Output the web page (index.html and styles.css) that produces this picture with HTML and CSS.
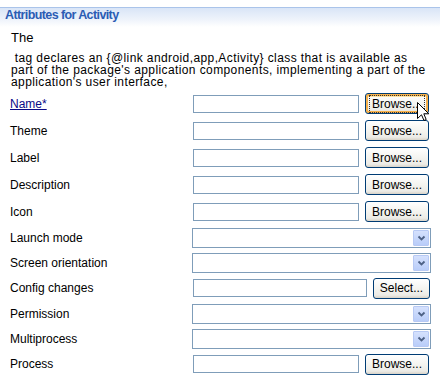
FILE: index.html
```html
<!DOCTYPE html>
<html lang="en">
<head>
  <meta charset="UTF-8" />
  <title>Attributes for Activity</title>
  <link rel="stylesheet" href="styles.css">
</head>
<body>
  <div class="section">
    <div class="section__head">Attributes for Activity</div>

    <!-- descrição -->
    <div class="desc">
      <p class="desc__first">The</p>
      <p class="desc__body">&nbsp;tag declares an {@link android,app,Activity} class that is available as<br>part of the package's application components, implementing a part of the<br>application's user interface,</p>
    </div>

    <!-- atributos -->
    <div class="attrs">
      <div class="row row--tall">
        <a class="label label--link" href="#">Name*</a>
        <div class="field">
          <input class="text" type="text">
          <button class="btn btn--browse btn--hover" type="button"><span class="btn__focus">Browse...</span></button>
        </div>
      </div>
      <div class="row row--tall">
        <span class="label">Theme</span>
        <div class="field">
          <input class="text" type="text">
          <button class="btn btn--browse" type="button">Browse...</button>
        </div>
      </div>
      <div class="row row--tall">
        <span class="label">Label</span>
        <div class="field">
          <input class="text" type="text">
          <button class="btn btn--browse" type="button">Browse...</button>
        </div>
      </div>
      <div class="row row--tall">
        <span class="label">Description</span>
        <div class="field">
          <input class="text" type="text">
          <button class="btn btn--browse" type="button">Browse...</button>
        </div>
      </div>
      <div class="row row--tall">
        <span class="label">Icon</span>
        <div class="field">
          <input class="text" type="text">
          <button class="btn btn--browse" type="button">Browse...</button>
        </div>
      </div>
      <div class="row">
        <span class="label">Launch mode</span>
        <div class="combo"><span class="combo__arrow"><svg width="9" height="6" viewBox="0 0 9 6"><path d="M1.5 1.5 L4.5 4.5 L7.5 1.5" fill="none" stroke="#4d6185" stroke-width="1.8"/></svg></span></div>
      </div>
      <div class="row">
        <span class="label">Screen orientation</span>
        <div class="combo"><span class="combo__arrow"><svg width="9" height="6" viewBox="0 0 9 6"><path d="M1.5 1.5 L4.5 4.5 L7.5 1.5" fill="none" stroke="#4d6185" stroke-width="1.8"/></svg></span></div>
      </div>
      <div class="row row--mid">
        <span class="label">Config changes</span>
        <div class="field">
          <input class="text text--wide" type="text">
          <button class="btn btn--select" type="button">Select...</button>
        </div>
      </div>
      <div class="row">
        <span class="label">Permission</span>
        <div class="combo"><span class="combo__arrow"><svg width="9" height="6" viewBox="0 0 9 6"><path d="M1.5 1.5 L4.5 4.5 L7.5 1.5" fill="none" stroke="#4d6185" stroke-width="1.8"/></svg></span></div>
      </div>
      <div class="row">
        <span class="label">Multiprocess</span>
        <div class="combo"><span class="combo__arrow"><svg width="9" height="6" viewBox="0 0 9 6"><path d="M1.5 1.5 L4.5 4.5 L7.5 1.5" fill="none" stroke="#4d6185" stroke-width="1.8"/></svg></span></div>
      </div>
      <div class="row row--mid">
        <span class="label">Process</span>
        <div class="field">
          <input class="text" type="text">
          <button class="btn btn--browse" type="button">Browse...</button>
        </div>
      </div>
    </div>
  </div>

  <!-- ponteiro do mouse sobre o botão -->
  <svg class="cursor" width="13" height="20" viewBox="0 0 13 20">
    <path d="M0.5 0.5 L0.5 16.5 L4.5 12.8 L7 18.5 L9.2 17.5 L6.8 11.8 L11.8 11.8 Z" fill="#fff" stroke="#000" stroke-width="1"/>
  </svg>
</body>
</html>
```

FILE: styles.css
```css
/* BASE ----------------------------------------------------------------*/
*,::before,::after{box-sizing:border-box;margin:0;padding:0}
body{
  font-family:"Liberation Sans",Arial,sans-serif;
  font-size:12px;
  color:#000;
  background:#fff;
  width:440px;
  height:379px;
  overflow:hidden;
  position:relative;
}

/* CABEÇALHO -----------------------------------------------------------*/
.section{margin-top:7px;border-top:1px solid #aac4ea}
.section__head{
  height:19px;
  padding:0 0 0 5px;
  font-weight:700;
  font-size:12.5px;
  line-height:15px;
  letter-spacing:-.6px;
  color:#2b5cb4;
  background:linear-gradient(to bottom,#d9e5f7,#eef3fb 60%,#fff);
}

/* DESCRIÇÃO -----------------------------------------------------------*/
.desc{padding:0 0 0 11px;line-height:12px}
.desc__first{margin-top:4px;font-size:13px;line-height:14px}
.desc__body{margin-top:7px;letter-spacing:.4px}

/* LINHAS --------------------------------------------------------------*/
.attrs{margin-top:2px}
.row{display:flex;align-items:center;height:25px}
.row--tall{height:27px}
.row--mid{height:26px}
.label{flex:0 0 192px;padding-left:10px;color:#000;text-decoration:none}
.label--link{color:#0a0a86;text-decoration:underline}

.field{display:flex;align-items:center;gap:6px;padding-left:1px}

.text{
  flex:0 0 166px;
  width:166px;
  height:18px;
  border:1px solid #7f9db9;
  background:#fff;
  outline:none;
}
.text--wide{flex-basis:174px;width:174px}

/* BOTÕES (estilo XP) --------------------------------------------------*/
.btn{
  height:21px;
  padding:0;
  border:1px solid #003c74;
  border-radius:3px;
  font-family:inherit;
  font-size:12px;
  color:#000;
  background:linear-gradient(to bottom,#fff,#f4f4f0 50%,#ecebe6 85%,#d8d3c8);
  display:flex;align-items:center;justify-content:center;
}
.btn--browse{flex:0 0 64px;width:64px}
.btn--select{flex:0 0 57px;width:57px}
.btn--hover{box-shadow:inset 0 0 0 2px #f6b04a,inset 0 1px 0 2px #fce4a4}
.btn__focus{outline:1px dotted #333;outline-offset:1px;padding:0 1px}

/* COMBO ---------------------------------------------------------------*/
.combo{
  flex:0 0 239px;
  height:20px;
  border:1px solid #7f9db9;
  background:#fff;
  display:flex;justify-content:flex-end;
  padding:1px;
}
.combo__arrow{
  width:16px;
  border:1px solid #b7c9f4;
  border-radius:1px;
  background:linear-gradient(to bottom,#d5e1fd,#b9cdf9);
  display:flex;align-items:center;justify-content:center;
}

/* CURSOR --------------------------------------------------------------*/
.cursor{position:absolute;left:417px;top:102px}
```
